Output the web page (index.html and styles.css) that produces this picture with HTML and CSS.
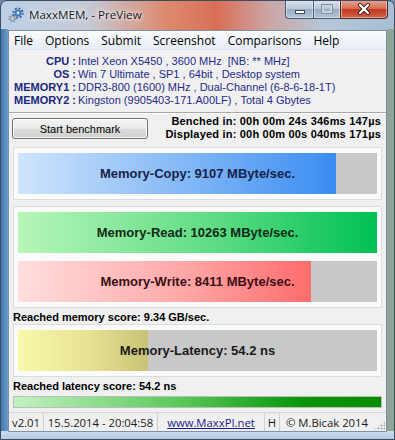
FILE: index.html
```html
<!DOCTYPE html>
<html lang="en">
<head>
    <meta charset="UTF-8">
    <title>MaxxMEM, - PreView</title>
    <link rel="stylesheet" href="styles.css">
</head>
<body>
    <div class="window">
        <!-- Title bar -->
        <div class="titlebar">
            <svg class="app-icon" width="16" height="16" viewBox="0 0 16 16">
                <circle cx="10" cy="6" r="4.6" fill="none" stroke="#2f5fa8" stroke-width="2" stroke-dasharray="1.8 1.8"/>
                <circle cx="10" cy="6" r="3.6" fill="#4a7cc4"/>
                <circle cx="10" cy="6" r="1.4" fill="#dfe8f2"/>
                <circle cx="4.6" cy="11.4" r="3.3" fill="none" stroke="#7d8797" stroke-width="1.6" stroke-dasharray="1.4 1.4"/>
                <circle cx="4.6" cy="11.4" r="2.5" fill="#9aa4b2"/>
                <circle cx="4.6" cy="11.4" r="1" fill="#eef1f5"/>
            </svg>
            <span class="title">MaxxMEM, - PreView</span>
            <div class="caption-buttons">
                <span class="cbtn cbtn-min"><i></i></span>
                <span class="cbtn cbtn-max"><i></i></span>
                <span class="cbtn cbtn-close">
                    <svg width="14" height="12" viewBox="0 0 14 12">
                        <path d="M3 2 L11 10 M11 2 L3 10" stroke="#3a2020" stroke-width="4" stroke-linecap="round"/>
                        <path d="M3 2 L11 10 M11 2 L3 10" stroke="#ffffff" stroke-width="2.2" stroke-linecap="round"/>
                    </svg>
                </span>
            </div>
        </div>

        <div class="client">
            <nav class="menu">
                <span>File</span>
                <span>Options</span>
                <span>Submit</span>
                <span>Screenshot</span>
                <span>Comparisons</span>
                <span>Help</span>
            </nav>

            <!-- System info -->
            <div class="info">
                <span class="info-label">CPU :</span>
                <span class="info-value">Intel Xeon X5450 , 3600 MHz &nbsp;[NB: ** MHz]</span>
                <span class="info-label">OS :</span>
                <span class="info-value">Win 7 Ultimate , SP1 , 64bit , Desktop system</span>
                <span class="info-label">MEMORY1 :</span>
                <span class="info-value">DDR3-800 (1600) MHz , Dual-Channel (6-8-6-18-1T)</span>
                <span class="info-label">MEMORY2 :</span>
                <span class="info-value">Kingston (9905403-171.A00LF) , Total 4 Gbytes</span>
            </div>

            <div class="bench">
                <button class="start-btn">Start benchmark</button>
                <div class="times">
                    <div>Benched in: 00h 00m 24s 346ms 147µs</div>
                    <div>Displayed in: 00h 00m 00s 040ms 171µs</div>
                </div>
            </div>

            <div class="panel">
                <div class="bar">
                    <div class="fill fill-copy" style="width: 88.6%"></div>
                    <div class="label label-copy">Memory-Copy: 9107 MByte/sec.</div>
                </div>
            </div>

            <div class="panel panel-gap">
                <div class="bar">
                    <div class="fill fill-read" style="width: 100%"></div>
                    <div class="label label-read">Memory-Read: 10263 MByte/sec.</div>
                </div>
                <div class="bar">
                    <div class="fill fill-write" style="width: 81.6%"></div>
                    <div class="label label-write">Memory-Write: 8411 MByte/sec.</div>
                </div>
            </div>

            <div class="score">Reached memory score: 9.34 GB/sec.</div>

            <div class="panel">
                <div class="bar">
                    <div class="fill fill-latency" style="width: 36.2%"></div>
                    <div class="label label-latency">Memory-Latency: 54.2 ns</div>
                </div>
            </div>

            <div class="score">Reached latency score: 54.2 ns</div>
            <div class="scorebar"></div>

            <div class="statusbar">
                <span class="cell cell-ver">v2.01</span>
                <span class="cell cell-date">15.5.2014 - 20:04:58</span>
                <span class="cell cell-link"><a href="#">www.MaxxPI.net</a></span>
                <span class="cell cell-h">H</span>
                <span class="cell cell-copy">© M.Bicak 2014</span>
                <span class="grip"></span>
            </div>
        </div>
    </div>
</body>
</html>
```

FILE: styles.css
```css
* {
    box-sizing: border-box;
}
body {
    margin: 0;
    font-family: "Liberation Sans", Arial, sans-serif;
    background: #6d8aa6;
}
.window {
    width: 395px;
    height: 440px;
    display: flex;
    flex-direction: column;
    padding: 0 7px 7px;
    border: 1px solid #3b4d63;
    border-radius: 7px 7px 0 0;
    overflow: hidden;
    background:
        linear-gradient(to bottom, #cfdeee, #b6c9de) bottom / 100% 8px no-repeat,
        linear-gradient(to right, #3f78b0 0, #6d9bc8 7px, transparent 7px, transparent 386px, #8ea596 386px) bottom / 100% 410px no-repeat,
        linear-gradient(to right, #bcd0e6 0%, #c6cad6 22%, #dd8a6e 42%, #d96f55 55%, #cba5a4 68%, #b6c7d8 82%, #a8bed4 100%);
}

/* Title bar */
.titlebar {
    height: 29px;
    display: flex;
    align-items: flex-start;
    flex-shrink: 0;
}
.app-icon {
    margin-top: 6px;
    flex-shrink: 0;
}
.title {
    margin: 6px 0 0 5px;
    font-family: "Open Sans", sans-serif;
    font-size: 11.6px;
    color: #101820;
    text-shadow: 0 0 6px #ffffff, 0 0 3px #ffffff;
}
.caption-buttons {
    margin: -1px -1px 0 auto;
    display: flex;
}
.cbtn {
    height: 19px;
    border: 1px solid #4a5566;
    border-top: none;
    display: flex;
    align-items: center;
    justify-content: center;
    box-shadow: inset 0 0 0 1px rgba(255, 255, 255, 0.45);
}
.cbtn-min {
    width: 28px;
    border-radius: 0 0 0 4px;
    border-right: none;
    background: linear-gradient(to bottom, #dfe6ee, #b7c4d4 50%, #98abc1 51%, #b3c6d9);
}
.cbtn-min i {
    width: 10px;
    height: 4px;
    margin-top: 5px;
    background: #fff;
    border: 1px solid #3f4a5a;
}
.cbtn-max {
    width: 27px;
    border-right: none;
    background: linear-gradient(to bottom, #dfe6ee, #b7c4d4 50%, #98abc1 51%, #b3c6d9);
}
.cbtn-max i {
    width: 10px;
    height: 8px;
    border: 2px solid #c7d2df;
    outline: 1px solid #8392a6;
}
.cbtn-close {
    width: 48px;
    border-radius: 0 0 4px 0;
    background: linear-gradient(to bottom, #e9a692, #d46a52 50%, #c1391f 51%, #d4604a);
    border-color: #4a2a24;
}

/* Client area */
.client {
    flex: 1;
    display: flex;
    flex-direction: column;
    background: #f0f0f0;
    border: 1px solid #7d90a6;
}
.menu {
    height: 19px;
    display: flex;
    align-items: center;
    font-family: "Open Sans", sans-serif;
    font-size: 12px;
    color: #000;
    background: linear-gradient(to bottom, #fbfcfe, #e6ecf5);
    border-bottom: 1px solid #dfe5ee;
}
.menu span {
    padding: 0 6px;
}
.menu span:first-child {
    padding-left: 5px;
}

.info {
    display: grid;
    grid-template-columns: 67px auto;
    column-gap: 2px;
    padding: 5px 0 5px;
    font-size: 11px;
    line-height: 13px;
    color: #1f2b8a;
}
.info-label {
    text-align: right;
    font-weight: bold;
    color: #1a2780;
}

.bench {
    height: 35px;
    display: flex;
    justify-content: space-between;
    padding: 0 5px 0 3px;
    border-top: 1px solid #a8a8a8;
    box-shadow: inset 0 1px 0 #ffffff;
}
.start-btn {
    width: 136px;
    height: 21px;
    margin-top: 5px;
    font-family: "Liberation Sans", Arial, sans-serif;
    font-size: 11px;
    color: #000;
    border: 1px solid #707070;
    border-radius: 3px;
    background: linear-gradient(to bottom, #f4f4f4, #e8e8e8 50%, #dcdcdc 51%, #d0d0d0);
    box-shadow: inset 0 0 0 1px #fcfcfc;
}
.times {
    padding-top: 2px;
    text-align: right;
    font-size: 11px;
    line-height: 13.3px;
    letter-spacing: 0.2px;
    font-weight: bold;
    color: #000;
}

/* Result panels */
.panel {
    margin: 0 4px;
    padding: 5px 4px;
    display: flex;
    flex-direction: column;
    gap: 8px;
    background: #fbfbfb;
    border: 1px solid #d8dde2;
}
.panel-gap {
    margin-top: 6px;
}
.bar {
    height: 41px;
    display: grid;
    background: #c8c8c8;
}
.bar > * {
    grid-area: 1 / 1;
}
.fill {
    height: 100%;
}
.fill-copy {
    background: linear-gradient(to right, #cfe5fc, #7fb6f6 55%, #3a8cf2);
}
.fill-read {
    background: linear-gradient(to right, #b7f6b9, #5ddc83 55%, #00c155);
}
.fill-write {
    background: linear-gradient(to right, #ffdede, #ffa9a9 55%, #ff6c6c);
}
.fill-latency {
    background: linear-gradient(to right, #f9f9aa, #e6e292 55%, #c9c275);
}
.label {
    align-self: center;
    justify-self: center;
    font-size: 13px;
    font-weight: bold;
}
.label-copy {
    color: #17214a;
}
.label-read {
    color: #0f2a17;
}
.label-write {
    color: #3a0f14;
}
.label-latency {
    color: #1a1a1a;
}

.score {
    height: 16px;
    padding: 2px 4px 0;
    font-size: 11px;
    line-height: 14px;
    font-weight: bold;
    color: #000;
}
.scorebar {
    height: 12px;
    margin: 3px 4px 0;
    border: 1px solid #b9c0b9;
    background: linear-gradient(to right, #c2f2c2 0%, #5ac85a 45%, #0a960a 78%, #008c00 100%);
}

/* Status bar */
.statusbar {
    flex: 1;
    margin-top: 4px;
    display: flex;
    border-top: 1px solid #d4d4d4;
    font-family: "Open Sans", sans-serif;
    font-size: 11.3px;
    line-height: 14px;
    color: #1a1a1a;
}
.cell {
    padding-top: 3px;
    text-align: center;
    border-right: 1px solid #cfcfcf;
}
.cell-ver {
    width: 35px;
}
.cell-date {
    width: 114px;
}
.cell-link {
    width: 107px;
}
.cell-link a {
    color: #1c1c8a;
}
.cell-h {
    width: 15px;
}
.cell-copy {
    width: 94px;
    border-right: none;
}
.grip {
    flex: 1;
    margin: 8px 1px 1px 0;
    background-image: radial-gradient(circle, #a8a8a8 0.8px, transparent 1.2px);
    background-size: 3px 3px;
    clip-path: polygon(100% 0, 100% 100%, 0 100%);
}
```
